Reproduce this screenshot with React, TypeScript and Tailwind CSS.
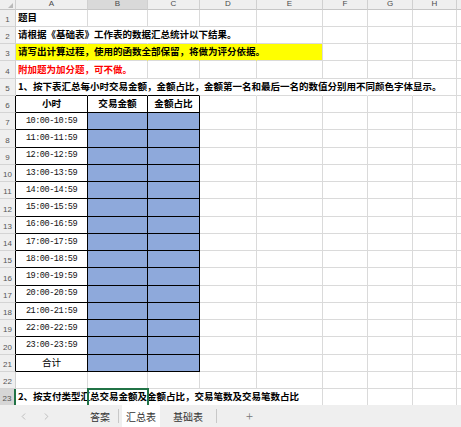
import React from "react";
import { ChevronLeft, ChevronRight } from "lucide-react";

// column widths A..H
const colW = ["w-[72px]", "w-[60px]", "w-[52px]", "w-[57px]", "w-[66px]", "w-[45px]", "w-[45px]", "w-[44px]"];
const letters = ["A", "B", "C", "D", "E", "F", "G", "H"];

const hours = [
  "10:00-10:59",
  "11:00-11:59",
  "12:00-12:59",
  "13:00-13:59",
  "14:00-14:59",
  "15:00-15:59",
  "16:00-16:59",
  "17:00-17:59",
  "18:00-18:59",
  "19:00-19:59",
  "20:00-20:59",
  "21:00-21:59",
  "22:00-22:59",
  "23:00-23:59",
];

type CellProps = {
  w?: string;
  r?: string;
  b?: string;
  className?: string;
  children?: React.ReactNode;
};

const Cell = ({ w = "", r, b, className = "", children }: CellProps) => (
  <div
    className={`relative flex h-full shrink-0 items-center border-r border-b ${r ?? "border-r-[#dadada]"} ${
      b ?? "border-b-[#dadada]"
    } ${w} ${className}`}
  >
    {children}
  </div>
);

const RowHead = ({ n, r, active }: { n: number; r?: string; active?: boolean }) => (
  <div
    className={`flex h-full w-[16px] shrink-0 items-end justify-center border-b border-b-[#d4d4d4] pb-[2px] text-[8px] leading-none text-[#555] font-['Liberation_Sans',sans-serif] ${
      active ? "border-r-2 border-r-[#217346] bg-[#d6d6d6]" : `border-r ${r ?? "border-r-[#cfcfcf]"} bg-[#efefef]`
    }`}
  >
    {n}
  </div>
);

// trailing empty cells from column index `from` to H plus filler
const Rest = ({ from }: { from: number }) => (
  <>
    {colW.slice(from).map((w, i) => (
      <Cell key={i} w={w} />
    ))}
    <div className="h-full flex-1 border-b border-b-[#dadada]" />
  </>
);

const Overflow = ({ children, className = "" }: { children: React.ReactNode; className?: string }) => (
  <span className={`relative z-10 whitespace-nowrap pl-[2px] text-[9.5px] font-bold leading-none ${className}`}>
    {children}
  </span>
);

const T = "border-r-transparent";

export default function App() {
  return (
    <div className="flex h-[427px] w-[461px] flex-col overflow-hidden bg-white font-['Noto_Sans_CJK_SC','Liberation_Sans',sans-serif] text-black">
      {/* sheet */}
      <div className="flex-1 overflow-hidden">
        {/* column header */}
        <div className="flex h-[9.5px] bg-[#efefef]">
          <div className="relative h-full w-[16px] shrink-0 border-r border-b border-r-[#cfcfcf] border-b-[#c6c6c6]">
            <div className="absolute bottom-[1px] right-[2px] h-0 w-0 border-l-[5px] border-t-[5px] border-l-transparent border-t-transparent border-b-[0px] border-r-[5px] border-r-[#b9b9b9]" />
          </div>
          {letters.map((l, i) => (
            <div
              key={l}
              className={`flex h-full shrink-0 items-center justify-center border-r border-b border-r-[#d0d0d0] border-b-[#c6c6c6] text-[8px] leading-none text-[#4a4a4a] font-['Liberation_Sans',sans-serif] ${
                colW[i]
              } ${l === "B" ? "bg-[#d9d9d9]" : ""}`}
            >
              {l}
            </div>
          ))}
          <div className="h-full flex-1 border-b border-b-[#c6c6c6]" />
        </div>

        {/* row 1 */}
        <div className="flex h-[17.25px]">
          <RowHead n={1} />
          <Cell w={colW[0]}>
            <Overflow>题目</Overflow>
          </Cell>
          <Rest from={1} />
        </div>

        {/* row 2 */}
        <div className="flex h-[17.25px]">
          <RowHead n={2} />
          <Cell w={colW[0]} r={T}>
            <Overflow>请根据《基础表》工作表的数据汇总统计以下结果。</Overflow>
          </Cell>
          <Cell w={colW[1]} r={T} />
          <Cell w={colW[2]} r={T} />
          <Rest from={3} />
        </div>

        {/* row 3 */}
        <div className="flex h-[17.25px]">
          <RowHead n={3} />
          <Cell w={colW[0]} r={T} className="bg-[#ffff00]">
            <Overflow>请写出计算过程，使用的函数全部保留，将做为评分依据。</Overflow>
          </Cell>
          <Cell w={colW[1]} r={T} className="bg-[#ffff00]" />
          <Cell w={colW[2]} r={T} className="bg-[#ffff00]" />
          <Cell w={colW[3]} r={T} className="bg-[#ffff00]" />
          <Cell w={colW[4]} className="bg-[#ffff00]" />
          <Rest from={5} />
        </div>

        {/* row 4 */}
        <div className="flex h-[17.25px]">
          <RowHead n={4} />
          <Cell w={colW[0]} r={T}>
            <Overflow className="text-[#ff0000]">附加题为加分题，可不做。</Overflow>
          </Cell>
          <Rest from={1} />
        </div>

        {/* row 5 */}
        <div className="flex h-[17.25px]">
          <RowHead n={5} />
          <Cell w={colW[0]} r={T} b="border-b-black">
            <Overflow>1、按下表汇总每小时交易金额，金额占比，金额第一名和最后一名的数值分别用不同颜色字体显示。</Overflow>
          </Cell>
          <Cell w={colW[1]} r={T} b="border-b-black" />
          <Cell w={colW[2]} r={T} b="border-b-black" />
          <Cell w={colW[3]} r={T} />
          <Cell w={colW[4]} r={T} />
          <Cell w={colW[5]} r={T} />
          <Cell w={colW[6]} r={T} />
          <Rest from={7} />
        </div>

        {/* row 6: table header */}
        <div className="flex h-[17.25px]">
          <RowHead n={6} r="border-r-black" />
          {["小时", "交易金额", "金额占比"].map((h, i) => (
            <Cell key={h} w={colW[i]} r="border-r-black" b="border-b-black" className="justify-center">
              <span className="text-[9.6px] font-bold leading-none">{h}</span>
            </Cell>
          ))}
          <Rest from={3} />
        </div>

        {/* rows 7-20 */}
        {hours.map((h, i) => (
          <div key={h} className="flex h-[17.25px]">
            <RowHead n={7 + i} r="border-r-black" />
            <Cell w={colW[0]} r="border-r-black" b="border-b-black" className="justify-center">
              <span className="font-['Liberation_Mono',monospace] text-[8.6px] leading-none tracking-[-0.5px] text-[#111]">
                {h}
              </span>
            </Cell>
            <Cell w={colW[1]} r="border-r-black" b="border-b-black" className="bg-[#8ea9db]" />
            <Cell w={colW[2]} r="border-r-black" b="border-b-black" className="bg-[#8ea9db]" />
            <Rest from={3} />
          </div>
        ))}

        {/* row 21 */}
        <div className="flex h-[17.25px]">
          <RowHead n={21} r="border-r-black" />
          <Cell w={colW[0]} r="border-r-black" b="border-b-black" className="justify-center">
            <span className="text-[9.6px] leading-none">合计</span>
          </Cell>
          <Cell w={colW[1]} r="border-r-black" b="border-b-black" className="bg-[#8ea9db]" />
          <Cell w={colW[2]} r="border-r-black" b="border-b-black" className="bg-[#8ea9db]" />
          <Rest from={3} />
        </div>

        {/* row 22 */}
        <div className="flex h-[17.25px]">
          <RowHead n={22} />
          <Cell w={colW[0]} />
          <Rest from={1} />
        </div>

        {/* row 23 with selected cell B23 */}
        <div className="relative flex h-[17.25px]">
          <RowHead n={23} active />
          <Cell w={colW[0]} r={T}>
            <Overflow>2、按支付类型汇总交易金额及金额占比，交易笔数及交易笔数占比</Overflow>
          </Cell>
          <Cell w={colW[1]} r={T} />
          <Cell w={colW[2]} r={T} />
          <Cell w={colW[3]} r={T} />
          <Rest from={4} />
          <div className="absolute left-[87px] top-[-1px] z-20 h-[20px] w-[62px] border-2 border-[#217346]" />
        </div>
      </div>

      {/* sheet tabs */}
      <div className="flex h-[22px] shrink-0 items-stretch bg-[#efefef] text-[10px] text-[#333]">
        <div className="flex w-[29px] items-center justify-end text-[#a8a8a8]">
          <ChevronLeft size={11} strokeWidth={1.5} />
        </div>
        <div className="flex w-[23px] items-center justify-end text-[#a8a8a8]">
          <ChevronRight size={11} strokeWidth={1.5} />
        </div>
        <div className="flex w-[66px] items-center justify-end pr-[8px]">答案</div>
        <div className="my-[4px] w-px bg-[#c8c8c8]" />
        <div className="ml-[3px] flex w-[38px] items-center justify-center bg-white">汇总表</div>
        <div className="flex w-[56px] items-center justify-center">基础表</div>
        <div className="my-[4px] w-px bg-[#c8c8c8]" />
        <div className="flex w-[36px] items-center justify-end text-[13px] font-light text-[#777]">+</div>
        <div className="flex-1" />
      </div>
    </div>
  );
}
